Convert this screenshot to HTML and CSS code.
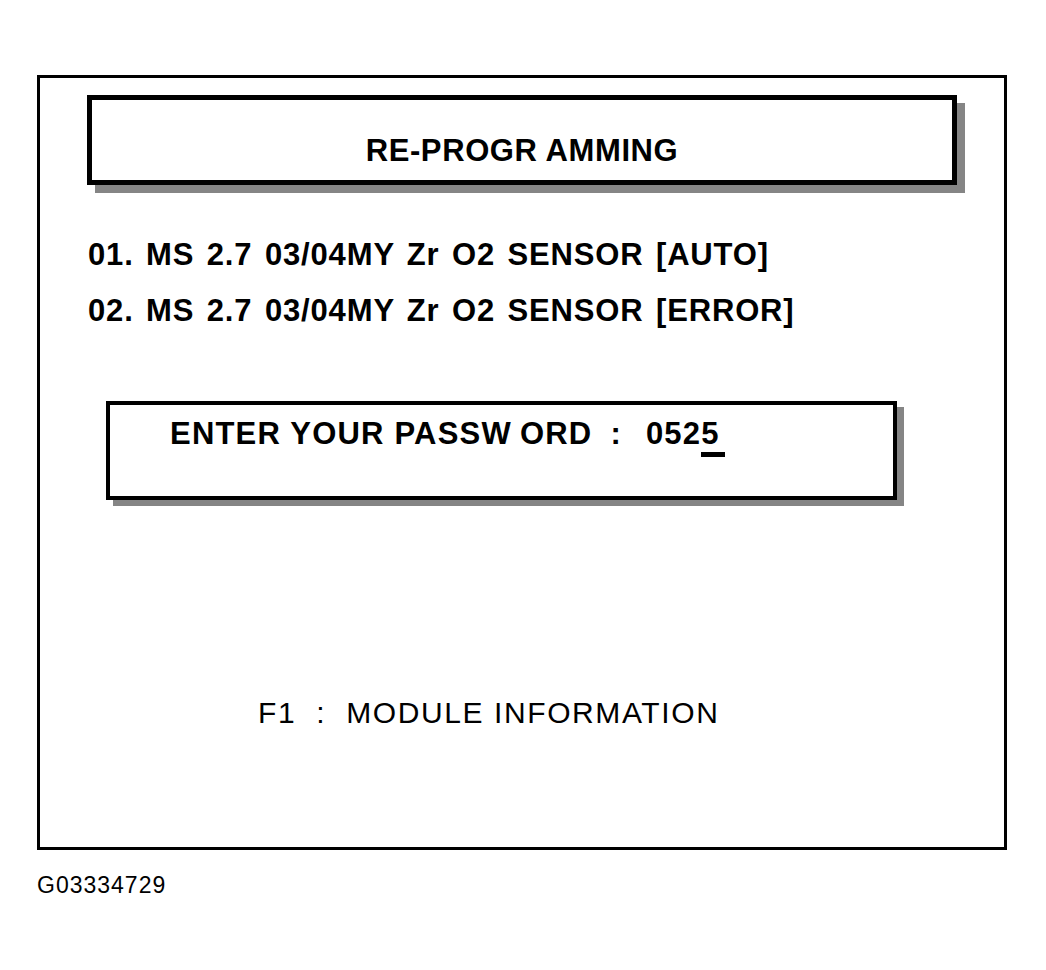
FILE: index.html
```html
<!DOCTYPE html>
<html>
<head>
<meta charset="utf-8">
<link rel="stylesheet" href="styles.css">
</head>
<body>
<div class="frame">
  <div class="title-box">
    <div class="title">RE-PROGR<span class="kgap">AMMING</span></div>
  </div>
  <div class="list">
    <div class="item">01. MS 2.7 03/04MY Zr O2 SENSOR [AUTO]</div>
    <div class="item">02. MS 2.7 03/04MY Zr O2 SENSOR [ERROR]</div>
  </div>
  <div class="pw-box">
    <div class="pw">ENTER YOUR PASSW<span class="kgap">ORD</span><span class="colon">:</span>052<span class="cursor">5</span></div>
  </div>
  <div class="fkey">F1<span class="fcolon">:</span>MODULE INFORMATION</div>
</div>
<div class="code">G03334729</div>
</body>
</html>
```
FILE: styles.css
```css
html, body {
  margin: 0;
  padding: 0;
  background: #ffffff;
}
body {
  font-family: "Liberation Sans", Arial, sans-serif;
  color: #000000;
  width: 1046px;
  height: 970px;
  overflow: hidden;
}
.frame {
  box-sizing: border-box;
  margin: 75px 0 0 37px;
  width: 970px;
  height: 775px;
  border: 3px solid #000;
  padding: 17px 0 0 47px;
}
.title-box {
  box-sizing: border-box;
  width: 870px;
  height: 90px;
  border: 5px solid #000;
  box-shadow: 8px 8px 0 #858585;
  padding-top: 35px;
}
.title {
  text-align: center;
  font-weight: bold;
  font-size: 31px;
  line-height: 31px;
  letter-spacing: 0.6px;
}
.kgap {
  margin-left: 8px;
}
.list {
  margin-top: 54px;
  margin-left: 1px;
  display: flex;
  flex-direction: column;
  gap: 25px;
}
.item {
  font-weight: bold;
  font-size: 31px;
  line-height: 31px;
  letter-spacing: 0.85px;
  word-spacing: 3px;
  white-space: nowrap;
}
.pw-box {
  box-sizing: border-box;
  margin: 75px 0 0 19px;
  width: 791px;
  height: 99px;
  border: 4px solid #000;
  box-shadow: 7px 6px 0 #858585;
  padding: 13px 0 0 60px;
}
.pw {
  font-weight: bold;
  font-size: 31px;
  line-height: 31px;
  letter-spacing: 1.2px;
  white-space: nowrap;
}
.colon {
  margin: 0 24px 0 18px;
}
.cursor {
  position: relative;
}
.cursor::after {
  content: "";
  position: absolute;
  left: 0;
  right: -5px;
  top: 36px;
  height: 5px;
  background: #000;
}
.fkey {
  margin: 198px 0 0 171px;
  font-size: 30px;
  line-height: 30px;
  letter-spacing: 1.6px;
  white-space: nowrap;
}
.fcolon {
  margin: 0 20px 0 20px;
}
.code {
  margin: 24px 0 0 37px;
  font-size: 23px;
  line-height: 23px;
  letter-spacing: 1px;
}
```
